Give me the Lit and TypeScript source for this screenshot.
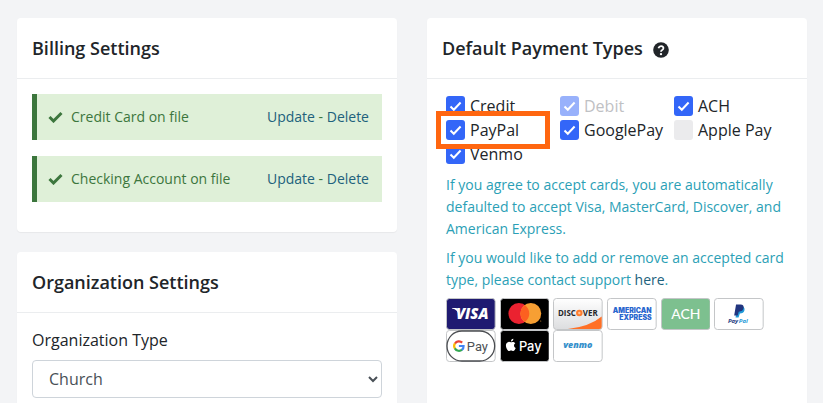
import { LitElement, html, svg, css, type TemplateResult } from "lit";
import { customElement } from "lit/decorators.js";

interface PaymentType {
  id: string;
  label: string;
  checked: boolean;
  disabled?: boolean;
  highlighted?: boolean;
}

const paymentTypes: PaymentType[] = [
  { id: "credit", label: "Credit", checked: true },
  { id: "debit", label: "Debit", checked: true, disabled: true },
  { id: "ach", label: "ACH", checked: true },
  { id: "paypal", label: "PayPal", checked: true, highlighted: true },
  { id: "googlepay", label: "GooglePay", checked: true },
  { id: "applepay", label: "Apple Pay", checked: false },
  { id: "venmo", label: "Venmo", checked: true },
];

const filesOnRecord = ["Credit Card on file", "Checking Account on file"];

const frame = (fill: string, stroke = "#c4c6c8") =>
  svg`<rect x=".5" y=".5" width="49" height="31" rx="3" fill=${fill} stroke=${stroke}/>`;

const brands: { name: string; art: TemplateResult }[] = [
  {
    name: "Visa",
    art: svg`${frame("#1f1a71")}
      <path d="M6 10h4.500l1.500 1.500 1 5-2-3.500Q9 10.800 6 10.400z" fill="#fff"/>
      <text x="10" y="21" class="sans" font-weight="800" font-style="italic" font-size="15" fill="#fff">VISA</text>`,
  },
  {
    name: "Mastercard",
    art: svg`${frame("#000")}
      <circle cx="19" cy="15.500" r="10.500" fill="#eb2230"/>
      <circle cx="31" cy="15.500" r="10.500" fill="#f79f33"/>
      <path d="M25 6.900a10.500 10.500 0 0 1 0 17.200a10.500 10.500 0 0 1 0-17.200z" fill="#fc6020"/>
      <circle cx="41" cy="23" r=".5" fill="#f79f33"/>`,
  },
  {
    name: "Discover",
    art: svg`<defs><linearGradient id="silver" x2="0" y2="1"><stop offset="0" stop-color="#fff"/><stop offset="1" stop-color="#dcdddf"/></linearGradient></defs>
      ${frame("url(#silver)")}
      <path d="M15 31Q37 28.500 49 18.500V28.500Q49 31 46.500 31z" fill="#ff7026"/>
      <text x="5" y="18" class="sans" font-weight="700" font-size="8" fill="#26272b">DISC</text>
      <circle cx="26.500" cy="15" r="3.300" fill="#ff7d2e"/>
      <circle cx="26.500" cy="15" r="1.200" fill="#ffc49c"/>
      <text x="30" y="18" class="sans" font-weight="700" font-size="8" fill="#26272b">VER</text>`,
  },
  {
    name: "American Express",
    art: svg`${frame("#fff")}
      <text x="45" y="15" text-anchor="end" class="inter" font-weight="900" font-size="7" fill="#2a66ce">AMERICAN</text>
      <text x="45" y="22" text-anchor="end" class="inter" font-weight="900" font-size="7" fill="#2a66ce">EXPRESS</text>`,
  },
  {
    name: "ACH",
    art: svg`${frame("#7dc08f")}
      <text x="25" y="21" text-anchor="middle" class="lato" font-weight="500" font-size="14" fill="#fff">ACH</text>`,
  },
  {
    name: "PayPal",
    art: svg`${frame("#fff")}
      <path d="M23.500 8.500h5.200q2.600 1 1.900 3.900t-4.600 3.100l-1.300 3.900h-3z" fill="#1f9ad8"/>
      <path d="M22.200 6.400h4.600q3.600.2 3 3.700t-4.900 3.600l-1.100 3.700h-3.500z" fill="#21357f"/>
      <text x="14" y="25" class="sans" font-weight="700" font-style="italic" font-size="6" fill="#253b80">Pay</text>
      <text x="25" y="25" class="sans" font-weight="700" font-style="italic" font-size="6" fill="#1f9ad8">Pal</text>`,
  },
  {
    name: "Google Pay",
    art: svg`${frame("#fff")}
      <rect x="1" y="1" width="48" height="30" rx="15" fill="#fff" stroke="#4b4d51" stroke-width="1.300"/>
      <g fill="none" stroke-width="2.200">
        <path d="M16.300 12.600A4.800 4.800 0 0 0 9 13.600" stroke="#e94335"/>
        <path d="M9 13.400A4.800 4.800 0 0 0 9 18.600" stroke="#fbbc04"/>
        <path d="M8.900 18.400A4.800 4.800 0 0 0 16.200 19.600" stroke="#34a853"/>
        <path d="M16 19.800Q17.800 18.400 17.700 16H13" stroke="#4285f4"/>
      </g>
      <text x="21" y="21" class="roboto" font-size="13" fill="#4e5155">Pay</text>`,
  },
  {
    name: "Apple Pay",
    art: svg`${frame("#000")}
      <path d="M11.100 12.300c-.8 0-1.500-.6-2.500-.4-2 .3-2.800 2-2.600 4.100.2 2.300 1.700 5 3.100 5 .8 0 1.100-.5 2.100-.5s1.200.5 2.100.5c1.100 0 2-1.500 2.500-2.900-2-1-2.300-3.600-.4-4.800-.8-1.200-2-1.500-2.800-1.400-.6.100-1 .4-1.500.4zM11 11.600c-.1-1.600 1-2.700 2.400-2.900.2 1.600-.9 2.900-2.400 2.900z" fill="#fff"/>
      <text x="19" y="21" class="inter" font-weight="500" font-size="13" fill="#fff">Pay</text>`,
  },
  {
    name: "Venmo",
    art: svg`${frame("#fff")}
      <text x="25" y="18" text-anchor="middle" class="sans" font-weight="800" font-style="italic" font-size="9" fill="#3590cb">venmo</text>`,
  },
];

@customElement("app-root")
export class AppRoot extends LitElement {
  static styles = css`
    :host {
      display: block;
      box-sizing: border-box;
      min-height: 100vh;
      padding: 18px 16px 20px 17px;
      background: #f3f4f6;
      color: #212529;
      font: 16px/24px "Open Sans", "Noto Sans", sans-serif;
    }
    *, *::before, *::after {
      box-sizing: border-box;
    }
    a {
      color: #21617c;
      text-decoration: none;
    }
    .columns {
      display: grid;
      grid-template-columns: 1fr 1fr;
      gap: 30px;
    }
    .stack {
      display: flex;
      flex-direction: column;
      gap: 20px;
    }
    .card {
      background: #fff;
      border-radius: 4px;
      box-shadow: 0 1px 1px rgba(0, 0, 0, 0.05);
    }
    .card-header {
      display: flex;
      align-items: center;
      gap: 10px;
      height: 61px;
      padding: 0 15px;
      border-bottom: 1px solid #ebedef;
    }
    .card-title {
      margin: 0;
      font-size: 18px;
      line-height: 24px;
      font-weight: 600;
    }
    .help {
      display: flex;
      margin: 4px 0 0;
      padding: 0;
      border: 0;
      background: none;
      color: #212529;
    }
    .card-body {
      padding: 15px;
    }
    .billing {
      display: flex;
      flex-direction: column;
      gap: 16px;
      padding-bottom: 30px;
    }
    .notice {
      display: flex;
      align-items: center;
      height: 46px;
      padding: 0 13px 0 11px;
      border-left: 5px solid #3c763d;
      background: #dff0d8;
      color: #3c763d;
      font-size: 14px;
    }
    .notice-text {
      flex: 1;
      margin-left: 8px;
    }
    .field-label {
      display: block;
      margin: 0 0 8px;
    }
    .select {
      display: block;
      width: 100%;
      height: 38px;
      padding: 6px 12px;
      border: 1px solid #ced4da;
      border-radius: 4px;
      background: #fff;
      color: #495057;
      font: inherit;
    }
    .payments {
      padding: 15px 10px 15px 19px;
    }
    .types {
      display: grid;
      grid-template-columns: repeat(3, 114px);
      margin: 0;
      padding: 0;
      border: 0;
    }
    .type {
      position: relative;
      display: flex;
      align-items: center;
      gap: 5px;
      height: 24px;
    }
    .highlighted::after {
      content: "";
      position: absolute;
      z-index: 1;
      inset: -7px 10px -7px -10px;
      border: 5px solid #ff6610;
      pointer-events: none;
    }
    .box {
      appearance: none;
      width: 19px;
      height: 20px;
      margin: 0;
      border-radius: 3px;
      background: #ebebed;
    }
    .box:checked {
      background: #3366f8 url("data:image/svg+xml,%3Csvg xmlns='http://www.w3.org/2000/svg' width='19' height='20' fill='none' stroke='white' stroke-width='2'%3E%3Cpath d='M4.500 10.500l3.300 3.300 6.800-7.300'/%3E%3C/svg%3E");
    }
    .box:disabled {
      opacity: 0.5;
    }
    .box:disabled + .type-label {
      color: #bfc1c4;
    }
    .note {
      margin: 0 0 7px;
      color: #2b9fb6;
      font-size: 14px;
      line-height: 22px;
    }
    .types + .note {
      margin-top: 8px;
    }
    .brands {
      display: grid;
      grid-template-columns: repeat(6, 1fr);
      column-gap: 4px;
      max-width: 318px;
      margin: 0;
      padding: 0;
      list-style: none;
    }
    .brand {
      display: block;
      width: 100%;
      height: 32px;
    }
    .sans { font-family: "Open Sans", sans-serif; }
    .inter { font-family: Inter, sans-serif; }
    .lato { font-family: Lato, sans-serif; }
    .roboto { font-family: Roboto, sans-serif; }
  `;

  private notice(text: string) {
    return html`<div class="notice">
      <svg width="15" height="12" viewBox="0 0 15 12" aria-hidden="true">
        <path d="M1.500 6l4 4L13.500 2" fill="none" stroke="currentColor" stroke-width="3"/>
      </svg>
      <span class="notice-text">${text}</span>
      <span><a href="#update">Update</a> - <a href="#delete">Delete</a></span>
    </div>`;
  }

  private paymentType(type: PaymentType) {
    return html`<div class="type ${type.highlighted ? "highlighted" : ""}">
      <input class="box" type="checkbox" id=${type.id} ?checked=${type.checked} ?disabled=${type.disabled}>
      <label class="type-label" for=${type.id}>${type.label}</label>
    </div>`;
  }

  render() {
    return html`<main class="columns">
      <div class="stack">
        <section class="card">
          <header class="card-header"><h2 class="card-title">Billing Settings</h2></header>
          <div class="card-body billing">${filesOnRecord.map((text) => this.notice(text))}</div>
        </section>
        <section class="card">
          <header class="card-header"><h2 class="card-title">Organization Settings</h2></header>
          <div class="card-body">
            <label class="field-label" for="org-type">Organization Type</label>
            <select class="select" id="org-type"><option>Church</option></select>
          </div>
        </section>
      </div>
      <section class="card">
        <header class="card-header">
          <h2 class="card-title">Default Payment Types</h2>
          <button class="help" type="button" aria-label="About payment types">
            <svg width="16" height="16" viewBox="0 0 16 16" aria-hidden="true">
              <circle cx="8" cy="8" r="7.800" fill="currentColor"/>
              <path d="M5.400 6.200Q6.200 4 8.100 4.100q2.400.2 2.300 2.100Q10.300 7.500 8.900 8.200 8 8.700 8 9.800" fill="none" stroke="#fff" stroke-width="1.800"/>
              <circle cx="8" cy="12.100" r="1.200" fill="#fff"/>
            </svg>
          </button>
        </header>
        <div class="card-body payments">
          <fieldset class="types" aria-label="Payment types">${paymentTypes.map((type) => this.paymentType(type))}</fieldset>
          <p class="note">If you agree to accept cards, you are automatically defaulted to accept Visa, MasterCard, Discover, and American Express.</p>
          <p class="note">If you would like to add or remove an accepted card type, please contact support <a href="#support">here</a>.</p>
          <ul class="brands">${brands.map((brand) => html`<li>
            <svg class="brand" viewBox="0 0 50 32" preserveAspectRatio="none" role="img" aria-label=${brand.name}>${brand.art}</svg>
          </li>`)}</ul>
        </div>
      </section>
    </main>`;
  }
}
